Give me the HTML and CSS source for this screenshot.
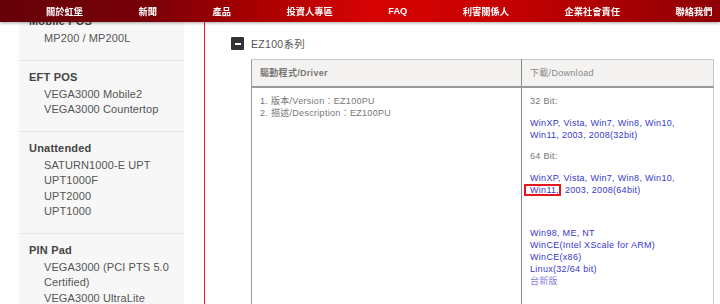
FILE: index.html
```html
<!DOCTYPE html>
<html lang="zh-TW">
<head>
    <meta charset="UTF-8">
    <meta name="viewport" content="width=device-width, initial-scale=1.0">
    <title>EZ100系列 - 驅動程式下載</title>
    <link rel="stylesheet" href="styles.css">
</head>
<body>
    <header class="topnav">
        <nav>
            <a href="#">關於虹堡</a>
            <a href="#">新聞</a>
            <a href="#">產品</a>
            <a href="#">投資人專區</a>
            <a href="#">FAQ</a>
            <a href="#">利害關係人</a>
            <a href="#">企業社會責任</a>
            <a href="#">聯絡我們</a>
        </nav>
    </header>

    <div class="page">
        <aside class="sidebar">
            <div class="group">
                <h3>Mobile POS</h3>
                <ul>
                    <li>MP200 / MP200L</li>
                </ul>
            </div>
            <div class="group">
                <h3>EFT POS</h3>
                <ul>
                    <li>VEGA3000 Mobile2</li>
                    <li>VEGA3000 Countertop</li>
                </ul>
            </div>
            <div class="group">
                <h3>Unattended</h3>
                <ul>
                    <li>SATURN1000-E UPT</li>
                    <li>UPT1000F</li>
                    <li>UPT2000</li>
                    <li>UPT1000</li>
                </ul>
            </div>
            <div class="group">
                <h3>PIN Pad</h3>
                <ul>
                    <li>VEGA3000 (PCI PTS 5.0 Certified)</li>
                    <li>VEGA3000 UltraLite</li>
                </ul>
            </div>
        </aside>

        <main class="content">
            <div class="series">
                <span class="toggle"></span>
                <h2>EZ100系列</h2>
            </div>
            <table class="drivers">
                <tr>
                    <th class="col-driver">驅動程式/Driver</th>
                    <th class="col-download">下載/Download</th>
                </tr>
                <tr>
                    <td class="col-driver">
                        <ol>
                            <li>版本/Version：EZ100PU</li>
                            <li>描述/Description：EZ100PU</li>
                        </ol>
                    </td>
                    <td class="col-download">
                        <p class="bit">32 Bit:</p>
                        <p><a href="#">WinXP, Vista, Win7, Win8, Win10,<br>Win11, 2003, 2008(32bit)</a></p>
                        <p class="bit">64 Bit:</p>
                        <p><a href="#">WinXP, Vista, Win7, Win8, Win10,<br><span class="mark">Win11,</span> 2003, 2008(64bit)</a></p>
                        <div class="legacy">
                            <a href="#">Win98, ME, NT</a>
                            <a href="#">WinCE(Intel XScale for ARM)</a>
                            <a href="#">WinCE(x86)</a>
                            <a href="#">Linux(32/64 bit)</a>
                            <a href="#" class="visited">台新版</a>
                        </div>
                    </td>
                </tr>
            </table>
        </main>
    </div>
</body>
</html>
```

FILE: styles.css
```css
body {
    margin: 0;
    font-family: "Liberation Sans", "Noto Sans CJK TC", sans-serif;
    background: #fff;
    color: #555;
}

/* top bar, fixed over the page */
.topnav {
    position: fixed;
    top: 0;
    left: 0;
    right: 0;
    height: 22px;
    z-index: 10;
    background: linear-gradient(90deg, #660208 0%, #780008 20%, #b00000 38%, #d80404 52%, #c60000 70%, #8e0006 100%);
    box-shadow: 0 1px 3px rgba(0,0,0,0.35);
}
.topnav nav {
    display: flex;
    align-items: center;
    gap: 55.5px;
    height: 22px;
    padding-left: 46px;
}
.topnav a {
    color: #fff;
    font-size: 9.25px;
    font-weight: bold;
    text-decoration: none;
    white-space: nowrap;
}

.page {
    display: flex;
    min-height: 100vh;
}

/* left product menu */
.sidebar {
    flex-shrink: 0;
    width: 165px;
    margin-left: 19px;
    background: #f7f7f7;
}
.group {
    padding: 8px 10px 13px 10px;
    border-bottom: 1px solid #e6e6e6;
}
.group:first-child {
    padding-top: 13px;
}
.group h3 {
    margin: 0 0 2px 0;
    font-size: 11px;
    line-height: 16px;
    color: #444;
    letter-spacing: 0.2px;
}
.group ul {
    list-style: none;
    margin: 0;
    padding: 0 0 0 15px;
}
.group li {
    font-size: 11px;
    line-height: 15.5px;
    color: #555;
    letter-spacing: 0.1px;
}

/* right content */
.content {
    flex: 1;
    margin-left: 20px;
    border-left: 1px solid #ec1c24;
    padding: 37px 6px 0 26px;
}
.series {
    display: flex;
    align-items: center;
    gap: 7px;
    height: 13px;
    margin-bottom: 9px;
}
.toggle {
    display: flex;
    align-items: center;
    justify-content: center;
    width: 13px;
    height: 13px;
    background: #333;
    border-radius: 1px;
}
.toggle::before {
    content: "";
    width: 6px;
    height: 2px;
    background: #fff;
}
.series h2 {
    margin: 0;
    font-size: 10.5px;
    font-weight: normal;
    color: #555;
    letter-spacing: 0.3px;
}

.drivers {
    width: calc(100% - 20px);
    margin-left: 20px;
    border-collapse: collapse;
    table-layout: fixed;
    border: 1px solid #c8c8c8;
    border-left-color: #999;
}
.drivers th {
    background: #f4f3f1;
    padding: 7px 8px;
    text-align: left;
    font-size: 9px;
    line-height: 12px;
    color: #888;
    font-weight: normal;
    letter-spacing: 0.3px;
    border-bottom: 2px solid #9a9a9a;
}
.drivers th.col-driver {
    font-weight: bold;
    color: #777;
}
.drivers .col-driver {
    width: 253px;
    border-right: 1px solid #888;
}
.drivers td {
    vertical-align: top;
    padding: 7px 8px 24px 8px;
    font-size: 9px;
    line-height: 12px;
    color: #777;
    letter-spacing: 0.3px;
}
.drivers ol {
    margin: 0;
    padding: 0;
    list-style: decimal inside;
}
.drivers p {
    margin: 0 0 9.5px 0;
}
.drivers a {
    color: #3838cc;
    text-decoration: none;
}
.drivers a.visited {
    color: #8282dc;
}
.legacy {
    margin-top: 31px;
}
.legacy a {
    display: block;
}
.mark {
    display: inline-block;
    line-height: 8px;
    margin: 0 1px 0 -6px;
    padding: 0 0 0 4px;
    border: 2px solid #e4161e;
}
```
